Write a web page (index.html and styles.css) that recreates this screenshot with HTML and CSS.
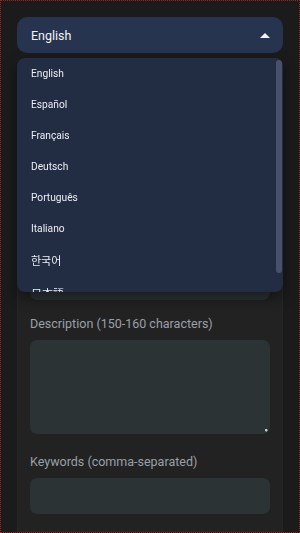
FILE: index.html
```html
<!DOCTYPE html>
<html lang="en">
<head>
  <meta charset="UTF-8">
  <meta name="viewport" content="width=device-width, initial-scale=1.0">
  <title>SEO Meta Generator</title>
  <link rel="stylesheet" href="styles.css">
</head>
<body>
  <div class="lang-picker">
    <button type="button" class="lang-select">
      <span>English</span>
      <span class="caret"></span>
    </button>

    <div class="lang-menu">
      <ul class="lang-list">
        <li>English</li>
        <li>Español</li>
        <li>Français</li>
        <li>Deutsch</li>
        <li>Português</li>
        <li>Italiano</li>
        <li lang="ko">한국어</li>
        <li lang="ja">日本語</li>
      </ul>
      <div class="thumb"></div>
    </div>
  </div>

  <form class="card">
    <div class="field">
      <label for="url">Page URL</label>
      <input type="text" id="url" class="input">
    </div>
    <div class="field">
      <label for="brand">Brand name</label>
      <input type="text" id="brand" class="input">
    </div>
    <div class="field">
      <label for="title">Title (50-60 characters)</label>
      <input type="text" id="title" class="input">
    </div>
    <div class="field">
      <label for="desc">Description (150-160 characters)</label>
      <textarea id="desc" class="input textarea"></textarea>
    </div>
    <div class="field">
      <label for="keywords">Keywords (comma-separated)</label>
      <input type="text" id="keywords" class="input">
    </div>
  </form>
</body>
</html>
```

FILE: styles.css
```css
:root {
  --page-bg: #1b1b1b;
  --card-bg: #222222;
  --select-bg: #27344f;
  --list-bg: #222c43;
  --field-bg: #2c3335;
  --label: #9aa0a9;
  --text: #eceef2;
}

html, body {
  margin: 0;
}

body {
  background: var(--page-bg);
  padding: 17px;
  font-family: Roboto, "Noto Sans", sans-serif;
  color: var(--text);
  position: relative;
}

body::after {
  content: "";
  position: fixed;
  top: 0; left: 0; right: 0; bottom: 0;
  border: 1px dotted #9c2424;
  pointer-events: none;
}

.lang-picker {
  position: relative;
  z-index: 2;
}

.lang-select {
  width: 100%;
  height: 36px;
  display: flex;
  align-items: center;
  justify-content: space-between;
  padding: 0 13px 0 14px;
  border: none;
  border-radius: 10px;
  background: var(--select-bg);
  color: #f2f3f5;
  font-family: inherit;
  font-size: 12.5px;
  cursor: pointer;
}

.caret {
  width: 0;
  height: 0;
  border-left: 5px solid transparent;
  border-right: 5px solid transparent;
  border-bottom: 5px solid #f2f3f5;
}

/* dropdown */
.lang-menu {
  position: absolute;
  top: 41px;
  left: 0;
  right: 0;
  height: 234px;
  background: var(--list-bg);
  border-radius: 8px;
  box-shadow: 0 6px 14px rgba(0, 0, 0, 0.45);
  overflow: hidden;
}

.lang-list {
  margin: 0;
  padding: 0 0 4px;
  list-style: none;
}

.lang-list li {
  padding: 8px 14px;
  font-size: 10.2px;
  line-height: 15px;
  color: var(--text);
}

.lang-list li[lang] {
  font-family: "Noto Sans CJK KR", "Noto Sans CJK JP", sans-serif;
  font-size: 11px;
  line-height: 17px;
}

.thumb {
  position: absolute;
  top: 2px;
  right: 1px;
  width: 6px;
  height: 213px;
  border-radius: 3px;
  background: #47526a;
}

.card {
  margin-top: 22px;
  background: var(--card-bg);
  border: 1px solid #262626;
  padding: 12px 12px 17px;
  display: flex;
  flex-direction: column;
  gap: 16px;
}

.field label {
  display: block;
  font-size: 12.5px;
  line-height: 16px;
  color: var(--label);
  margin-bottom: 8px;
}

.input {
  display: block;
  box-sizing: border-box;
  width: 100%;
  height: 36px;
  border: none;
  border-radius: 7px;
  background: var(--field-bg);
  color: var(--text);
  font-family: inherit;
  font-size: 12.5px;
  padding: 8px 10px;
}

.textarea {
  height: 94px;
  margin-bottom: 4px;
  resize: vertical;
}

.textarea::-webkit-resizer {
  background: radial-gradient(circle at 75% 75%, #c8cbd0 1px, transparent 1.6px);
}
```
